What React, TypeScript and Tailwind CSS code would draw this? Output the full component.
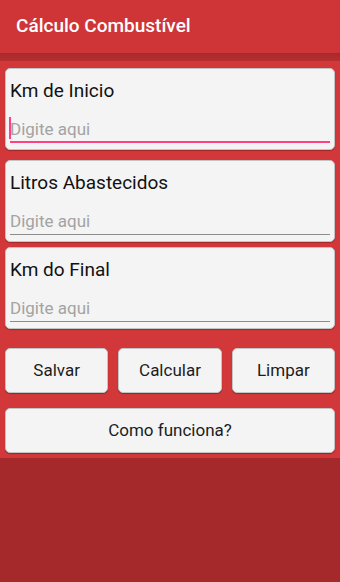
const fields = [
  { label: 'Km de Inicio', focused: true },
  { label: 'Litros Abastecidos', focused: false },
  { label: 'Km do Final', focused: false },
];

function Field({ label, focused }: { label: string; focused: boolean }) {
  return (
    <div className="rounded-[5px] border border-[#c4c4c4] bg-[#f4f4f4] px-[4px] pt-[10px] pb-[6px] shadow-[0_1px_1px_rgba(0,0,0,0.25)]">
      <div className="text-[19px] leading-[24px] text-[#111]">{label}</div>
      <div className="relative mt-[16px] text-[17px] leading-[20px] text-[#a3a3a3]">
        {focused && <span className="absolute left-[-1px] top-[-2px] h-[22px] w-[2px] bg-[#ff4081]" />}
        Digite aqui
      </div>
      <div className={focused ? 'mt-[2px] h-[2px] bg-[#ff4081]' : 'mt-[3px] h-px bg-[#8c8c8c]'} />
    </div>
  );
}

function Button({ children }: { children: string }) {
  return (
    <button className="h-[45px] rounded-[5px] border border-[#c4c4c4] bg-[#f4f4f4] text-[17px] text-[#1c1c1c] shadow-[0_1px_1px_rgba(0,0,0,0.3)]">
      {children}
    </button>
  );
}

export default function App() {
  return (
    <div className="flex min-h-[582px] flex-col bg-[#a5292b]" style={{ fontFamily: 'Roboto, "Liberation Sans", sans-serif' }}>
      <header className="flex h-[53px] items-center bg-[#cf3437] pl-[16px]">
        <h1 className="text-[19px] font-medium text-white">Cálculo Combustível</h1>
      </header>
      <main className="bg-[#d2383a]">
        <div className="h-[8px] bg-gradient-to-b from-[#a8292b] to-[#b52f31]" />
        <div className="flex flex-col px-[5px] pt-[7px] pb-[5px]">
          <div className="flex flex-col gap-[10px]">
            <Field {...fields[0]} />
            <Field {...fields[1]} />
          </div>
          <div className="mt-[5px]">
            <Field {...fields[2]} />
          </div>
          <div className="mt-[19px] grid grid-cols-3 gap-[10px]">
            <Button>Salvar</Button>
            <Button>Calcular</Button>
            <Button>Limpar</Button>
          </div>
          <div className="mt-[15px] grid">
            <Button>Como funciona?</Button>
          </div>
        </div>
      </main>
    </div>
  );
}
